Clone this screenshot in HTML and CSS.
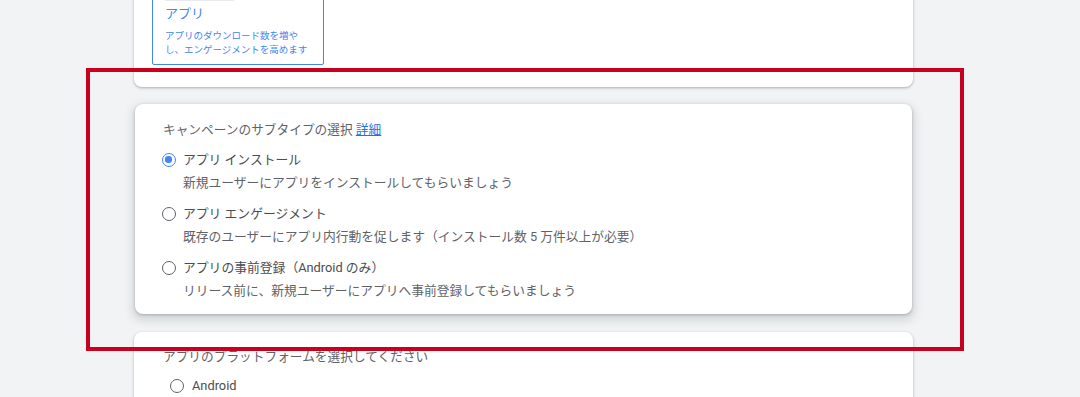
FILE: index.html
```html
<!DOCTYPE html>
<html lang="ja">
<head>
<meta charset="utf-8">
<link rel="stylesheet" href="styles.css">
</head>
<body>
<div class="page">
  <div class="column">
    <section class="card card-top">
      <div class="type-box">
        <div class="type-art"></div>
        <div class="type-title">アプリ</div>
        <div class="type-desc">アプリのダウンロード数を増や<br>し、エンゲージメントを高めます</div>
      </div>
    </section>

    <section class="card card-main">
      <div class="card-heading">キャンペーンのサブタイプの選択 <a class="link" href="#">詳細</a></div>
      <div class="options">
        <div class="option">
          <div class="option-row"><span class="radio radio-on"></span><span class="option-label">アプリ インストール</span></div>
          <div class="option-desc">新規ユーザーにアプリをインストールしてもらいましょう</div>
        </div>
        <div class="option">
          <div class="option-row"><span class="radio"></span><span class="option-label">アプリ エンゲージメント</span></div>
          <div class="option-desc">既存のユーザーにアプリ内行動を促します（インストール数 5 万件以上が必要）</div>
        </div>
        <div class="option">
          <div class="option-row"><span class="radio"></span><span class="option-label">アプリの事前登録（Android のみ）</span></div>
          <div class="option-desc">リリース前に、新規ユーザーにアプリへ事前登録してもらいましょう</div>
        </div>
      </div>
    </section>

    <section class="card card-bottom">
      <div class="card-heading">アプリのプラットフォームを選択してください</div>
      <div class="platform-row"><span class="radio"></span><span class="option-label">Android</span></div>
    </section>
  </div>
  <div class="highlight"></div>
</div>
</body>
</html>
```

FILE: styles.css
```css
html, body {
  margin: 0;
  padding: 0;
}
body {
  background: #f1f3f4;
  font-family: Roboto, "Noto Sans CJK JP", sans-serif;
  color: #3c4043;
  overflow: hidden;
  height: 397px;
}
.page {
  position: relative;
  width: 1080px;
  height: 397px;
  overflow: hidden;
}
.column {
  margin-left: 134px;
  width: 779px;
  display: flex;
  flex-direction: column;
  gap: 17px;
}
.card {
  background: #fff;
  border-radius: 8px;
  box-shadow: 0 1px 2px rgba(60,64,67,.25), 0 1px 3px 1px rgba(60,64,67,.10);
}
.card-top {
  margin-top: -86px;
  padding: 18px 0 22px 18px;
}
.type-box {
  width: 146px;
  border: 1.5px solid #4285f4;
  border-radius: 2px;
  padding: 8px 12px 7px 12px;
}
.type-art {
  width: 77px;
  height: 60px;
  margin-left: -4px;
  background: #e8eaed;
  border-radius: 6px;
}
.type-title {
  margin-top: 4px;
  font-size: 13px;
  line-height: 18px;
  color: #4285f4;
}
.type-desc {
  margin-top: 6px;
  font-size: 9.5px;
  line-height: 14px;
  color: #4285f4;
  white-space: nowrap;
}
.card-main {
  margin-left: 1px;
  margin-right: 1px;
  padding: 16px 28px 13px 27px;
  box-shadow: 0 1px 3px rgba(60,64,67,.30), 0 4px 8px 3px rgba(60,64,67,.15);
}
.card-heading {
  font-size: 12.7px;
  line-height: 20px;
  color: #5f6368;
  padding-left: 1px;
}
.link {
  color: #1a73e8;
  text-decoration: underline;
}
.options {
  margin-top: 10px;
  display: flex;
  flex-direction: column;
  gap: 11px;
}
.option-row {
  display: flex;
  align-items: center;
  gap: 7px;
  height: 20px;
}
.radio {
  box-sizing: border-box;
  width: 14px;
  height: 14px;
  border-radius: 50%;
  border: 1.6px solid #5f6368;
  flex: none;
  position: relative;
}
.radio-on {
  border-color: #4285f4;
}
.radio-on::after {
  content: "";
  position: absolute;
  left: 2.2px;
  top: 2.2px;
  width: 6.4px;
  height: 6.4px;
  border-radius: 50%;
  background: #4285f4;
}
.option-label {
  font-size: 12.8px;
  line-height: 20px;
  color: #4a4d51;
}
.option-desc {
  margin-top: 3px;
  padding-left: 21px;
  font-size: 12.75px;
  line-height: 20px;
  color: #5f6368;
  white-space: nowrap;
}
.card-bottom {
  margin-top: 1px;
  height: 120px;
  padding: 15px 0 0 28px;
}
.platform-row {
  margin-top: 9px;
  margin-left: 8px;
  display: flex;
  align-items: center;
  gap: 8px;
  height: 20px;
}
.highlight {
  position: absolute;
  left: 86px;
  top: 68px;
  width: 870px;
  height: 275px;
  border: 4px solid #c8001e;
}
```
